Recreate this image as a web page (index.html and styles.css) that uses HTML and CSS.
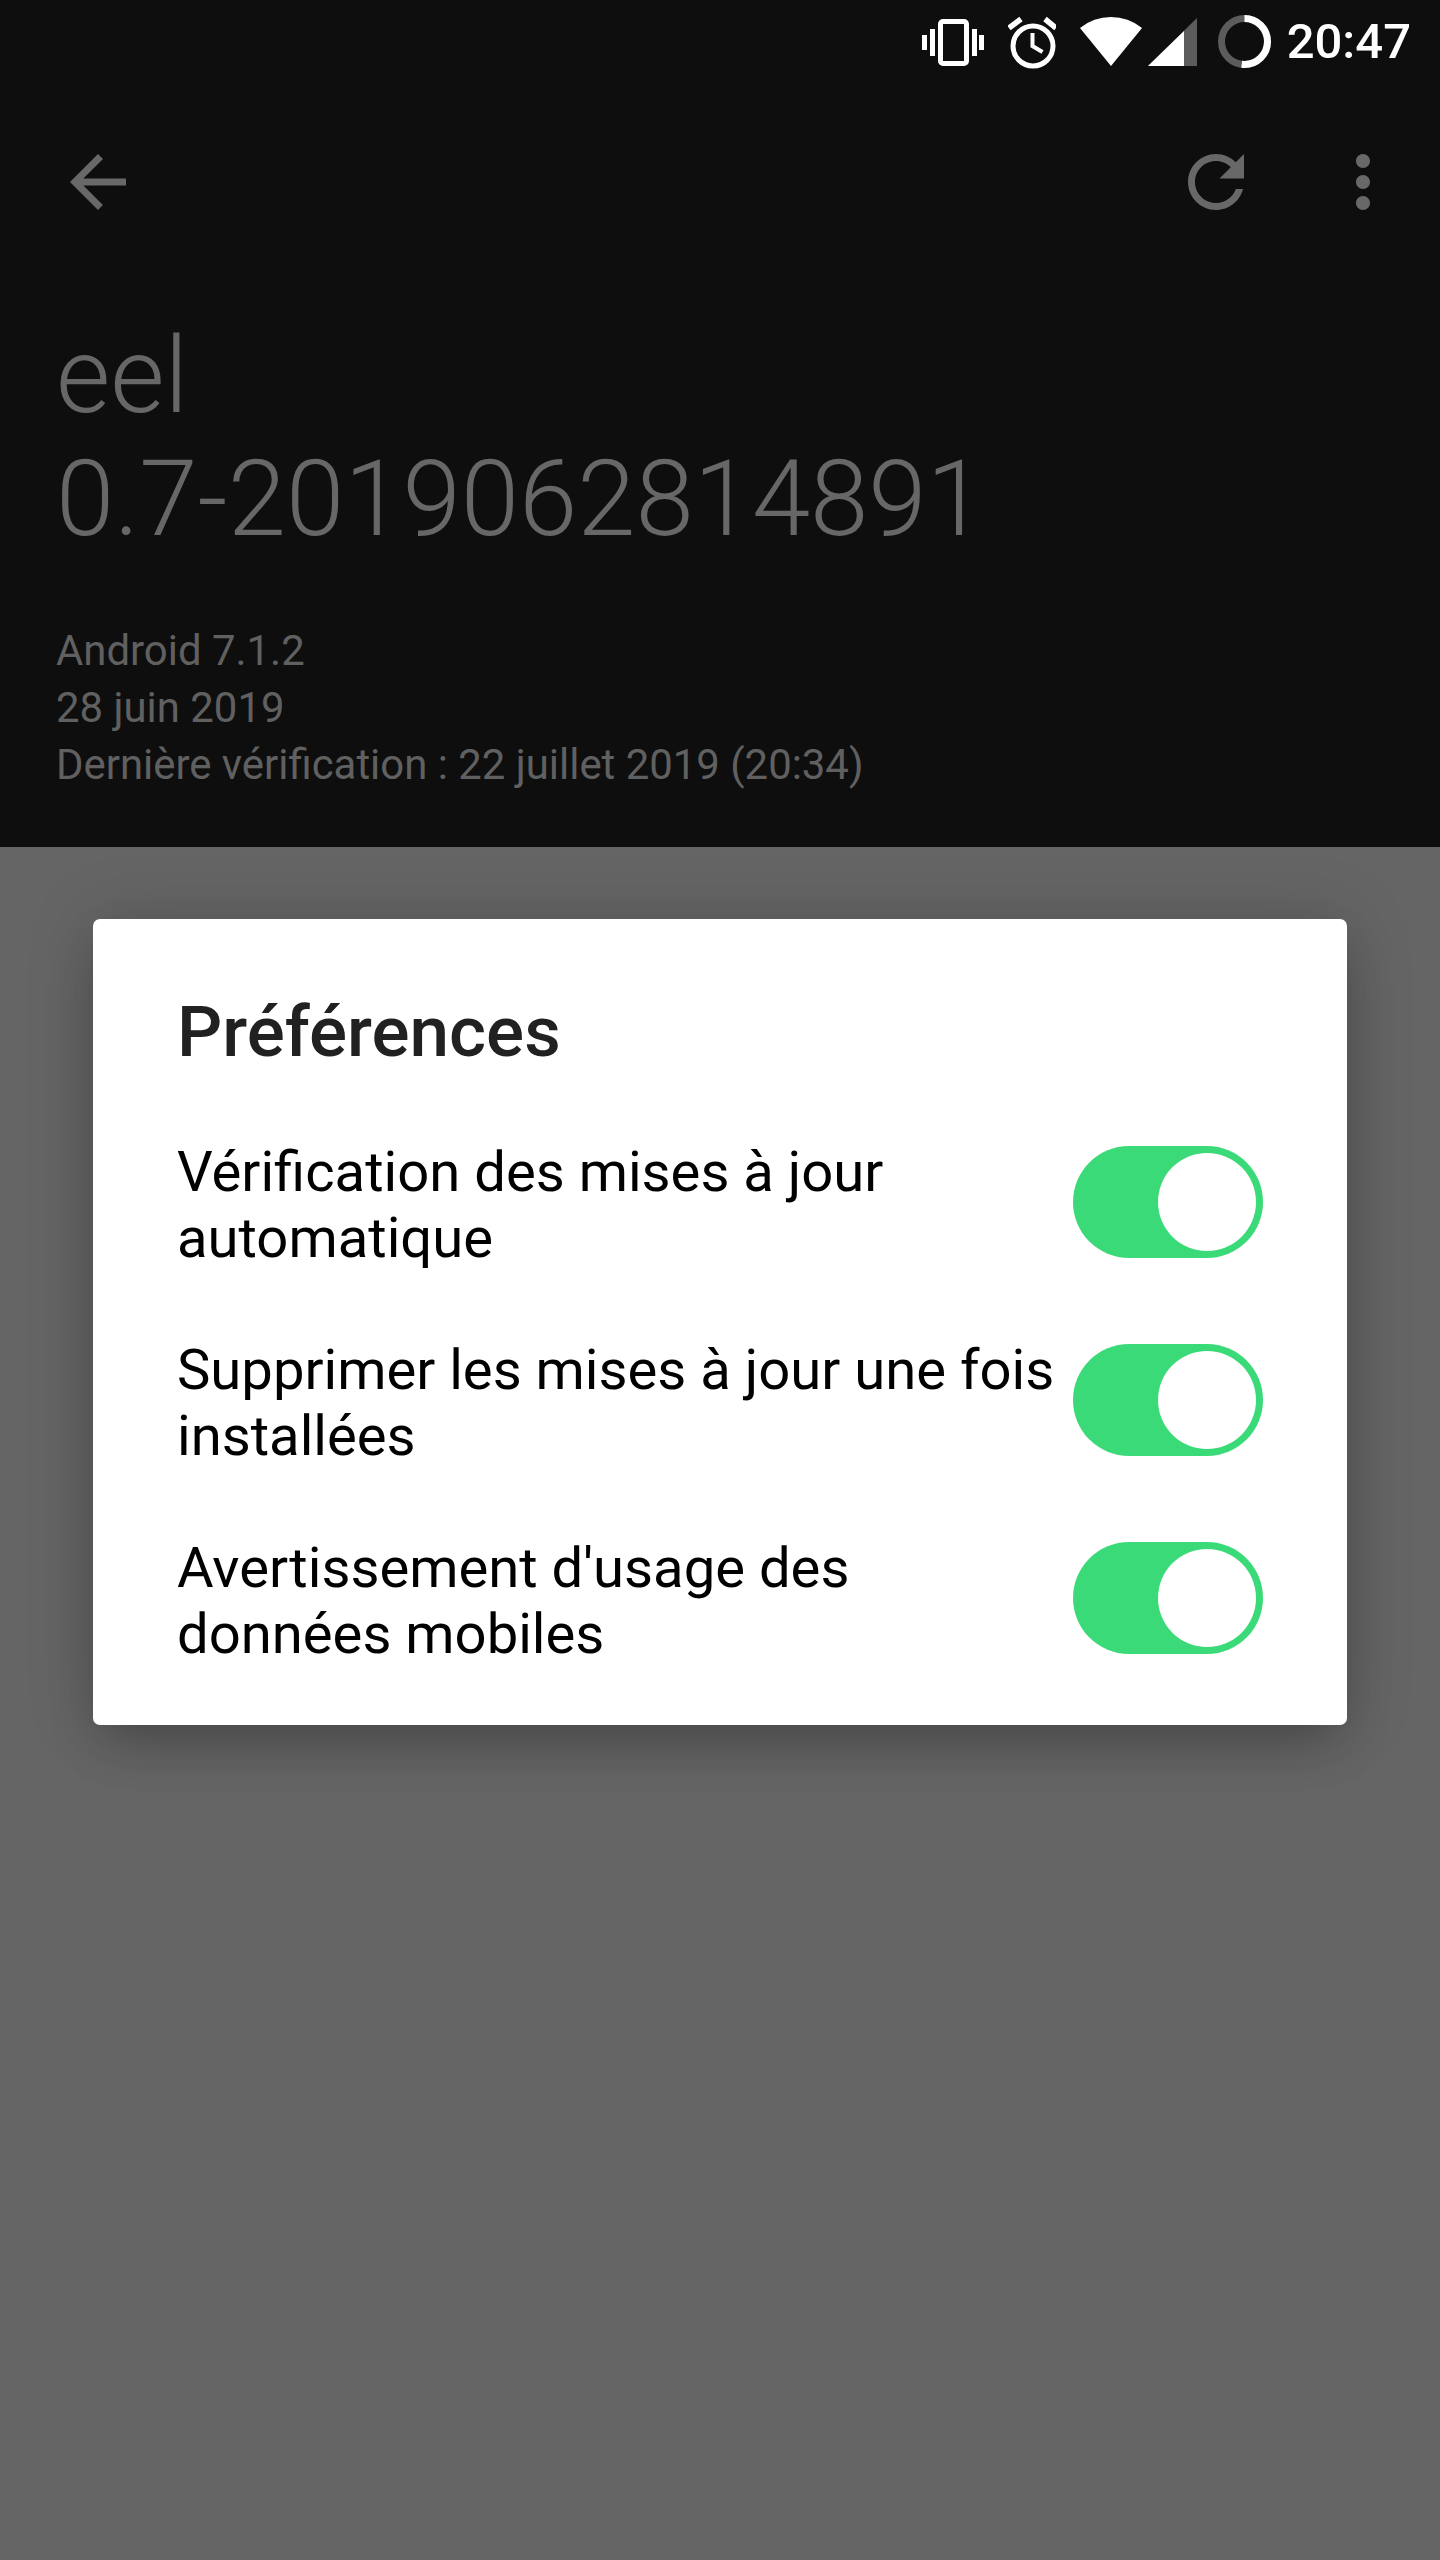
FILE: index.html
```html
<!DOCTYPE html>
<html lang="fr">
<head>
    <meta charset="UTF-8">
    <title>Préférences</title>
    <link rel="stylesheet" href="styles.css">
</head>
<body>
    <div class="status-bar">
        <svg class="icon-vibrate" width="63" height="84" viewBox="0 0 63 84">
            <rect x="18.5" y="21.5" width="26" height="42" rx="2.5" fill="none" stroke="#fff" stroke-width="5"/>
            <path fill="#fff" d="M0 35h5v15H0zM8 29h5v27H8zM50 29h5v27h-5zM57 35h5v15h-5z"/>
        </svg>
        <svg class="icon-alarm" width="48" height="84" viewBox="0 0 48 84">
            <circle cx="25" cy="46" r="20" fill="none" stroke="#fff" stroke-width="5"/>
            <path fill="none" stroke="#fff" stroke-width="4" d="M24.5 33v13l10 6"/>
            <path fill="none" stroke="#fff" stroke-width="5.5" d="M1 28l12-9M37 19l11 9"/>
        </svg>
        <svg class="icon-wifi" width="62" height="84" viewBox="0 0 62 84">
            <path fill="#fff" d="M31 66L0 28A49 49 0 0 1 62 28z"/>
        </svg>
        <svg class="icon-signal" width="49" height="84" viewBox="0 0 49 84">
            <path fill="#5c5c5c" d="M0 66h49V18z"/>
            <path fill="#fff" d="M0 66h36V31z"/>
        </svg>
        <svg class="icon-battery" width="53" height="84" viewBox="0 0 53 84">
            <circle cx="26.5" cy="41.5" r="23" fill="none" stroke="#5c5c5c" stroke-width="7"/>
            <circle cx="26.5" cy="41.5" r="23" fill="none" stroke="#fff" stroke-width="7" pathLength="100" stroke-dasharray="52 48" transform="rotate(-90 26.5 41.5)"/>
        </svg>
        <span class="clock">20:47</span>
    </div>

    <div class="update-header">
        <div class="toolbar">
            <svg class="tool-icon" viewBox="0 0 24 24"><path d="M20 11H7.83l5.59-5.59L12 4l-8 8 8 8 1.41-1.41L7.83 13H20v-2z"/></svg>
            <div class="toolbar-actions">
                <svg class="tool-icon" viewBox="0 0 24 24"><path d="M17.65 6.35C16.2 4.9 14.21 4 12 4c-4.42 0-7.99 3.58-7.99 8s3.57 8 7.99 8c3.73 0 6.84-2.55 7.73-6h-2.08c-.82 2.33-3.04 4-5.65 4-3.31 0-6-2.69-6-6s2.69-6 6-6c1.66 0 3.14.69 4.22 1.78L13 11h7V4l-2.35 2.35z"/></svg>
                <svg class="tool-icon" viewBox="0 0 24 24"><path d="M12 8c1.1 0 2-.9 2-2s-.9-2-2-2-2 .9-2 2 .9 2 2 2zm0 2c-1.1 0-2 .9-2 2s.9 2 2 2 2-.9 2-2-.9-2-2-2zm0 6c-1.1 0-2 .9-2 2s.9 2 2 2 2-.9 2-2-.9-2-2-2z"/></svg>
            </div>
        </div>
        <h1 class="build-name">eel<br>0.7-2019062814891</h1>
        <p class="build-meta">Android 7.1.2<br>28 juin 2019<br>Dernière vérification : 22 juillet 2019 (20:34)</p>
    </div>

    <div class="page-body">
        <div class="dialog">
            <h2 class="dialog-title">Préférences</h2>
            <div class="pref-row">
                <span class="pref-label">Vérification des mises à jour automatique</span>
                <span class="switch"><span class="switch-knob"></span></span>
            </div>
            <div class="pref-row">
                <span class="pref-label">Supprimer les mises à jour une fois installées</span>
                <span class="switch"><span class="switch-knob"></span></span>
            </div>
            <div class="pref-row">
                <span class="pref-label">Avertissement d'usage des données mobiles</span>
                <span class="switch"><span class="switch-knob"></span></span>
            </div>
        </div>
    </div>
</body>
</html>
```
FILE: styles.css
```css
* {
    box-sizing: border-box;
}
body {
    margin: 0;
    height: 2560px;
    overflow: hidden;
    display: flex;
    flex-direction: column;
    font-family: Roboto, "Noto Sans", sans-serif;
    background-color: #656565;
}
.status-bar {
    height: 84px;
    display: flex;
    justify-content: flex-end;
    align-items: flex-start;
    padding-right: 29px;
    background-color: #0e0e0e;
}
.status-bar svg {
    flex: none;
}
.icon-alarm {
    margin-left: 23px;
}
.icon-wifi {
    margin-left: 24px;
}
.icon-signal {
    margin-left: 6px;
}
.icon-battery {
    margin-left: 21px;
}
.clock {
    margin-left: 16px;
    color: #fff;
    font-size: 49px;
    font-weight: 500;
    line-height: 84px;
}
.update-header {
    height: 763px;
    padding: 0 35px 0 56px;
    background-color: #0e0e0e;
    color: #676767;
}
.toolbar {
    height: 196px;
    display: flex;
    justify-content: space-between;
    align-items: center;
}
.toolbar-actions {
    display: flex;
    gap: 63px;
}
.tool-icon {
    width: 84px;
    height: 84px;
    fill: #686868;
}
.build-name {
    margin: 35px 0 0;
    font-size: 105px;
    font-weight: 300;
    line-height: 123px;
}
.build-meta {
    margin: 61px 0 0;
    font-size: 41.9px;
    line-height: 57px;
    color: #606060;
}
/* Preferences dialog */
.page-body {
    flex: 1;
    padding: 72px 93px 0;
}
.dialog {
    padding: 72px 84px 58px;
    background-color: #fff;
    border-radius: 7px;
    box-shadow: 0 0 70px rgba(0, 0, 0, 0.15), 0 24px 50px -10px rgba(0, 0, 0, 0.24);
}
.dialog-title {
    margin: 0;
    color: #212121;
    font-size: 71px;
    font-weight: 500;
    line-height: 82px;
}
.pref-row {
    display: flex;
    align-items: center;
    height: 132px;
    margin-top: 66px;
}
.pref-label {
    flex: 1;
    padding-right: 10px;
    color: #000;
    font-size: 56.2px;
    line-height: 66px;
}
.switch {
    flex: none;
    width: 190px;
    height: 112px;
    margin-bottom: 6px;
    padding: 7px;
    display: flex;
    justify-content: flex-end;
    background-color: #3ada78;
    border-radius: 56px;
}
.switch-knob {
    width: 98px;
    height: 98px;
    background-color: #fff;
    border-radius: 50%;
}
```
